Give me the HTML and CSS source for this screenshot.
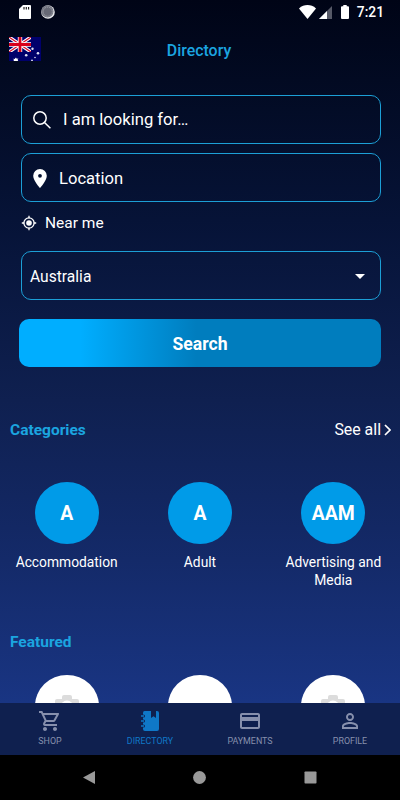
FILE: index.html
```html
<!DOCTYPE html>
<html lang="en">
<head>
    <meta charset="UTF-8">
    <meta name="viewport" content="width=device-width, initial-scale=1.0">
    <title>Directory</title>
    <link rel="stylesheet" href="styles.css">
</head>
<body>
    <div class="status-bar">
        <svg class="sd" width="12" height="14" viewBox="0 0 12 14"><path d="M4 0h7a1 1 0 0 1 1 1v12a1 1 0 0 1-1 1H1a1 1 0 0 1-1-1V4z" fill="#fff"/><path d="M5 2v2.5M7.3 2v2.5M9.6 2v2.5" stroke="#111" stroke-width="1.1"/></svg>
        <svg class="sync" width="14" height="14" viewBox="0 0 14 14"><circle cx="7" cy="7" r="6.8" fill="#e8e9ec"/><circle cx="6.4" cy="6.4" r="6.1" fill="#777985"/><circle cx="6.7" cy="6.7" r="4.5" fill="#666875" stroke="#a3a4ac" stroke-width="1" stroke-dasharray="1 1"/></svg>
        <svg class="wifi" width="17" height="14" viewBox="0 0 17 14"><path d="M0 3.4C5-1 12-1 17 3.4L8.5 14z" fill="#fff"/></svg>
        <svg class="signal" width="13" height="13" viewBox="0 0 13 13"><path d="M13 0v13H0z" fill="#565967"/><path d="M8 5v8H0z" fill="#fff"/></svg>
        <svg class="battery" width="8" height="14" viewBox="0 0 8 14"><path d="M2.3 0h3.4v1.2H7q1 0 1 1V13q0 1-1 1H1q-1 0-1-1V2.2q0-1 1-1h1.3z" fill="#fff"/></svg>
        <span class="time">7:21</span>
    </div>

    <header class="header">
        <svg class="flag" width="32" height="24" viewBox="0 0 32 24">
            <rect width="32" height="24" fill="#00006b"/>
            <svg width="22" height="15" viewBox="0 0 22 15">
                <path d="M0 0l22 15M22 0L0 15" stroke="#fff" stroke-width="3.4"/>
                <path d="M0 0l22 15M22 0L0 15" stroke="#d8102a" stroke-width="1.2"/>
                <path d="M11 0v15M0 7.5h22" stroke="#fff" stroke-width="4.4"/>
                <path d="M11 0v15M0 7.5h22" stroke="#d8001b" stroke-width="2.8"/>
            </svg>
            <path d="M7 20.5l.7 1.3 1.7-.2-.8 1.2.6 1.2H4.5l.6-1.2-1.4-1 1.9.1z" fill="#fff"/>
            <g fill="#dfe0f2"><circle cx="17.2" cy="18.3" r="1.3"/><circle cx="23.5" cy="11.8" r="1.2"/><circle cx="29" cy="16.2" r="1.3"/><circle cx="26" cy="20.5" r=".8"/><circle cx="23" cy="23.5" r=".9"/></g>
        </svg>
        <h1>Directory</h1>
    </header>

    <main class="content">
        <form class="search-form">
            <div class="field keyword">
                <svg width="18" height="18" viewBox="0 0 18 18" fill="none" stroke="#fff" stroke-width="1.5"><circle cx="7" cy="7" r="6.2"/><path d="M11.5 11.5L17.4 17.3"/></svg>
                <span>I am looking for…</span>
            </div>
            <div class="field location">
                <svg width="14" height="19" viewBox="0 0 14 19"><path fill="#fff" fill-rule="evenodd" d="M7 0a6.8 6.8 0 0 0-6.8 6.8C.2 11.7 7 19 7 19s6.8-7.3 6.8-12.2A6.8 6.8 0 0 0 7 0zm0 4.9a1.9 1.9 0 1 1 0 3.8 1.9 1.9 0 0 1 0-3.8z"/></svg>
                <span>Location</span>
            </div>
            <div class="near-me">
                <svg width="16" height="16" viewBox="0 0 16 16" fill="none" stroke="#fff" stroke-width="1.3"><circle cx="8" cy="8" r="5.1"/><circle cx="8" cy="8" r="2.8" fill="#fff" stroke="none"/><path d="M8 .8v2.4M8 12.8v2.4M.8 8h2.4M12.8 8h2.4"/></svg>
                <span>Near me</span>
            </div>
            <div class="field country">
                <span>Australia</span>
                <svg width="10" height="5" viewBox="0 0 10 5"><path d="M0 0h10L5 5z" fill="#fff"/></svg>
            </div>
            <button type="button" class="search-button">Search</button>
        </form>

        <section class="categories">
            <div class="section-head">
                <h2>Categories</h2>
                <a class="see-all">See all<svg width="7" height="12" viewBox="0 0 7 12" fill="none" stroke="#fff" stroke-width="1.7"><path d="M1 1l5 5-5 5"/></svg></a>
            </div>
            <div class="row">
                <div class="item"><div class="circle">A</div><p>Accommodation</p></div>
                <div class="item"><div class="circle">A</div><p>Adult</p></div>
                <div class="item"><div class="circle">AAM</div><p>Advertising and Media</p></div>
            </div>
        </section>

        <section class="featured">
            <h2>Featured</h2>
            <div class="row">
                <div class="item"><div class="circle white"><svg width="24" height="22" viewBox="0 0 24 22"><path fill="#dcdcdc" fill-rule="evenodd" d="M2 4h5V2q0-2 2-2h6q2 0 2 2v2h5a2 2 0 0 1 2 2v14a2 2 0 0 1-2 2H2a2 2 0 0 1-2-2V6a2 2 0 0 1 2-2zm10 1.5a6.5 6.5 0 1 0 0 13 6.5 6.5 0 0 0 0-13z"/></svg></div></div>
                <div class="item"><div class="circle white"></div></div>
                <div class="item"><div class="circle white"><svg width="24" height="22" viewBox="0 0 24 22"><path fill="#dcdcdc" fill-rule="evenodd" d="M2 4h5V2q0-2 2-2h6q2 0 2 2v2h5a2 2 0 0 1 2 2v14a2 2 0 0 1-2 2H2a2 2 0 0 1-2-2V6a2 2 0 0 1 2-2zm10 1.5a6.5 6.5 0 1 0 0 13 6.5 6.5 0 0 0 0-13z"/></svg></div></div>
            </div>
        </section>
    </main>

    <nav class="tabs">
        <div class="tab">
            <svg width="24" height="24" viewBox="0 0 24 24"><path fill="currentColor" d="M15.55 13c.75 0 1.41-.41 1.75-1.03l3.58-6.49A.996.996 0 0 0 20.01 4H5.21l-.94-2H1v2h2l3.6 7.59-1.35 2.44C4.52 15.37 5.48 17 7 17h12v-2H7l1.1-2h7.45zM6.16 6h12.15l-2.76 5H8.53L6.16 6zM7 18c-1.1 0-1.99.9-1.99 2S5.9 22 7 22s2-.9 2-2-.9-2-2-2zm10 0c-1.1 0-1.99.9-1.99 2s.89 2 1.99 2 2-.9 2-2-.9-2-2-2z"/></svg>
            <span>SHOP</span>
        </div>
        <div class="tab active">
            <svg width="24" height="24" viewBox="0 0 24 24">
                <path fill="currentColor" d="M6.5 2H13v7l2.5-1.8L18 9V2h1q2 0 2 2v16q0 2-2 2H7q-2 0-2-2V4q0-2 1.5-2z"/>
                <g fill="#0f204f"><circle cx="5.5" cy="7" r="1.5"/><circle cx="5.5" cy="12" r="1.5"/><circle cx="5.5" cy="17" r="1.5"/></g>
                <path d="M3 7h3M3 12h3M3 17h3" stroke="currentColor" stroke-width="1.3"/>
            </svg>
            <span>DIRECTORY</span>
        </div>
        <div class="tab">
            <svg width="24" height="24" viewBox="0 0 24 24"><path fill="currentColor" d="M20 4H4c-1.11 0-1.99.89-1.99 2L2 18c0 1.11.89 2 2 2h16c1.11 0 2-.89 2-2V6c0-1.11-.89-2-2-2zm0 14H4v-6h16v6zm0-10H4V6h16v2z"/></svg>
            <span>PAYMENTS</span>
        </div>
        <div class="tab">
            <svg width="24" height="24" viewBox="0 0 24 24"><path fill="currentColor" d="M12 5.9a2.1 2.1 0 1 1 0 4.2 2.1 2.1 0 0 1 0-4.2m0 9c2.97 0 6.1 1.46 6.1 2.1v1.1H5.9V17c0-.64 3.13-2.1 6.1-2.1M12 4C9.79 4 8 5.79 8 8s1.79 4 4 4 4-1.79 4-4-1.79-4-4-4zm0 9c-2.67 0-8 1.34-8 4v3h16v-3c0-2.66-5.33-4-8-4z"/></svg>
            <span>PROFILE</span>
        </div>
    </nav>

    <div class="system-nav">
        <svg width="12" height="13" viewBox="0 0 12 13"><path d="M12 0v13L0 6.5z" fill="#999"/></svg>
        <svg width="13" height="13" viewBox="0 0 13 13"><circle cx="6.5" cy="6.5" r="6.4" fill="#999"/></svg>
        <svg width="13" height="13" viewBox="0 0 13 13"><rect x=".5" y=".5" width="12" height="12" rx=".8" fill="#999"/></svg>
    </div>
</body>
</html>
```
FILE: styles.css
```css
* {
    box-sizing: border-box;
}

body {
    margin: 0;
    height: 800px;
    overflow: hidden;
    display: flex;
    flex-direction: column;
    font-family: Roboto, sans-serif;
    color: #fff;
    background: linear-gradient(to bottom, #000416 0, #020a22 80px, #061337 220px, #0f2050 400px, #142a69 560px, #193583 703px);
}

svg {
    display: block;
    flex: none;
}

h1, h2, p {
    margin: 0;
}

.status-bar {
    flex: none;
    height: 24px;
    padding: 0 16px 0 19px;
    display: flex;
    align-items: center;
}

.sync {
    margin-left: 10px;
}

.wifi {
    margin-left: auto;
}

.signal {
    margin-left: 3px;
}

.battery {
    margin-left: 9px;
}

.time {
    margin-left: 8px;
    font-size: 13.8px;
    font-weight: 500;
}

.header {
    flex: none;
    height: 50px;
    padding: 0 9px;
    display: grid;
    grid-template-columns: 32px 1fr 32px;
    align-items: center;
}

.header h1 {
    text-align: center;
    font-size: 15.9px;
    font-weight: 500;
    color: #1ba5e0;
    padding: 2px 2px 0 0;
}

.content {
    flex: 1;
    min-height: 0;
    overflow: hidden;
}

.search-form {
    padding: 21px 19px 0;
}

.field {
    height: 49px;
    margin-left: 2px;
    border: 1px solid #1c9fd6;
    border-radius: 10px;
    display: flex;
    align-items: center;
    font-size: 16.6px;
}

.keyword {
    padding-left: 11px;
    gap: 12px;
}

.location {
    margin-top: 9px;
    padding: 1px 0 0 11px;
    gap: 12px;
}

.near-me {
    height: 40px;
    padding: 1px 0 0 2px;
    display: flex;
    align-items: center;
    gap: 8px;
    font-size: 15.5px;
}

.country {
    margin-top: 9px;
    padding: 2px 15px 0 8px;
    justify-content: space-between;
    font-size: 15.6px;
}

.search-button {
    display: block;
    width: 100%;
    height: 48px;
    margin-top: 19px;
    padding: 2px 0 0;
    border: none;
    border-radius: 10px;
    background: linear-gradient(to right, #00aeff 17%, #007dbe 49%);
    color: #fff;
    font-family: inherit;
    font-size: 17.6px;
    font-weight: 700;
}

h2 {
    font-size: 15.5px;
    line-height: 20px;
    font-weight: 700;
    color: #1ba5e0;
}

.categories {
    height: 212px;
    padding-top: 53px;
}

.section-head {
    padding: 0 9px 0 10px;
    display: flex;
    justify-content: space-between;
}

.see-all {
    display: flex;
    align-items: center;
    gap: 3px;
    font-size: 15.9px;
    line-height: 20px;
}

.row {
    display: grid;
    grid-template-columns: repeat(3, 1fr);
    margin-top: 42px;
}

.item {
    text-align: center;
    font-size: 13.8px;
    line-height: 17.5px;
}

.item p {
    margin: 10px 5px 0;
}

.circle {
    width: 64px;
    height: 62px;
    margin: 0 auto;
    padding-top: 2px;
    border-radius: 50%;
    background: #009be8;
    display: flex;
    align-items: center;
    justify-content: center;
    font-size: 19.4px;
    font-weight: 700;
}

.featured {
    padding-top: 53px;
}

.featured h2 {
    padding-left: 10px;
}

.featured .row {
    margin-top: 23px;
}

.white {
    padding-top: 0;
    background: #fff;
}

.tabs {
    flex: none;
    height: 52px;
    display: grid;
    grid-template-columns: repeat(4, 1fr);
    background: #0f204f;
}

.tab {
    padding-top: 6px;
    display: flex;
    flex-direction: column;
    align-items: center;
    gap: 2px;
    font-size: 8.9px;
    line-height: 12px;
    color: #8790ad;
}

.active {
    color: #0f78c8;
}

.system-nav {
    flex: none;
    height: 45px;
    background: #000;
    display: flex;
    align-items: center;
    justify-content: center;
    gap: 98px;
}
```
